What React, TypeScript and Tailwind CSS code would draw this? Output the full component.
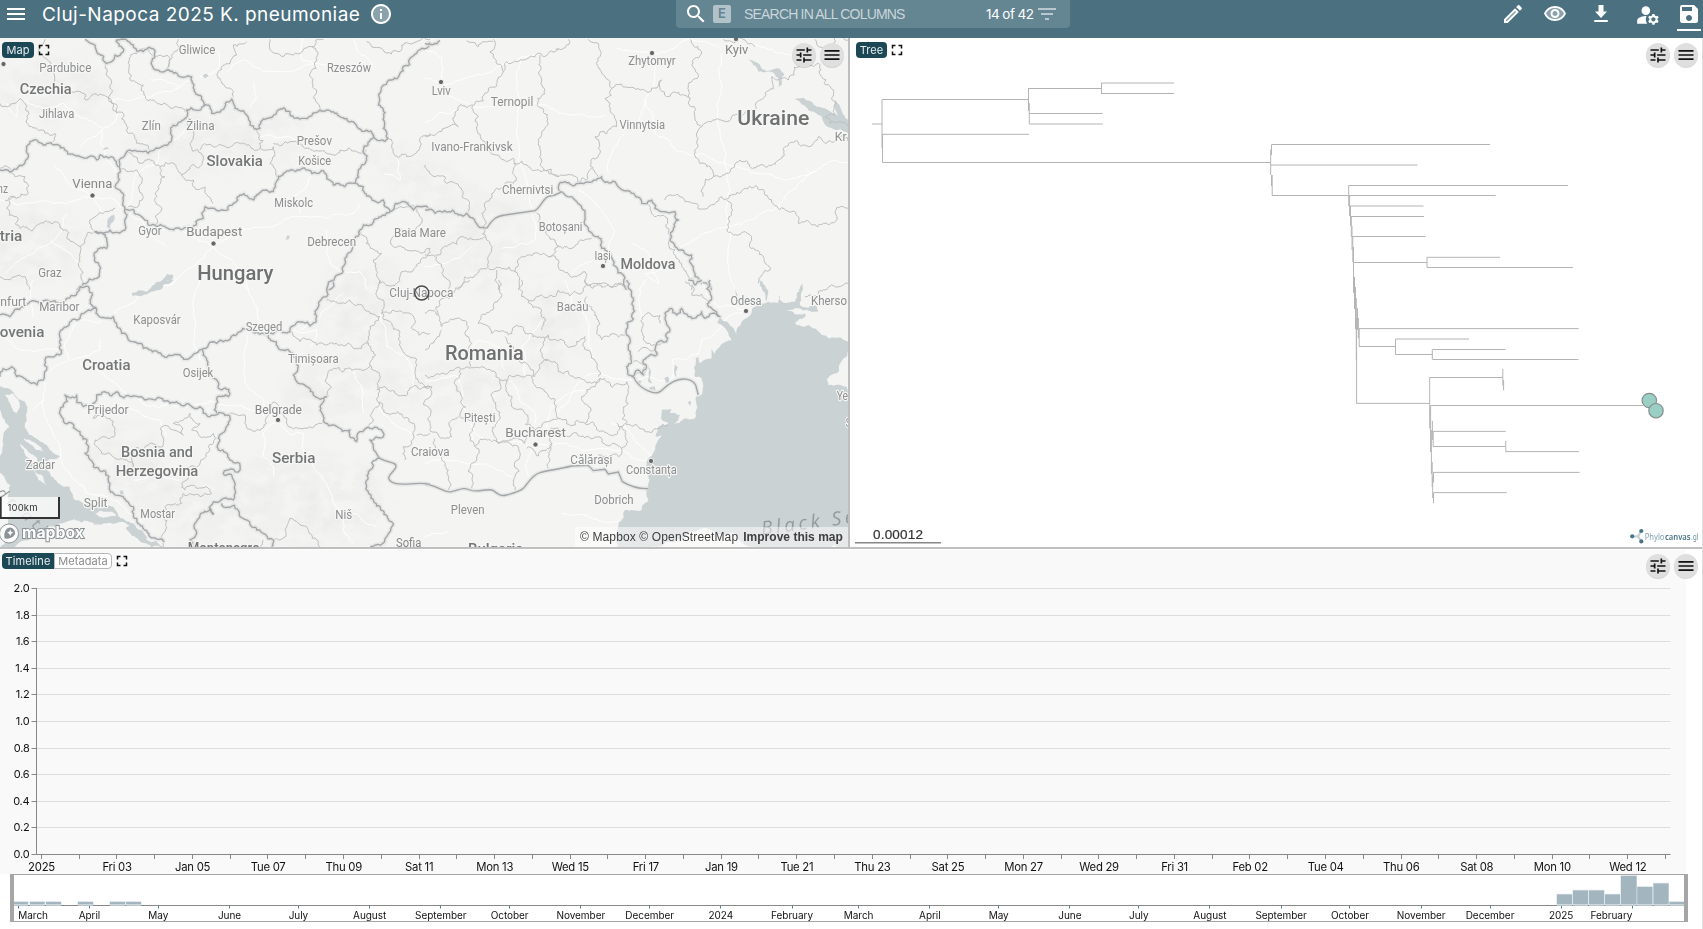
import React from "react";
import { MdManageAccounts, MdSave } from "react-icons/md";

const ICONS = {
  menu: "M3 18h18v-2H3v2zm0-5h18v-2H3v2zm0-7v2h18V6H3z",
  search:
    "M15.5 14h-.79l-.28-.27C15.41 12.59 16 11.11 16 9.5 16 5.91 13.09 3 9.5 3S3 5.91 3 9.5 5.91 16 9.5 16c1.61 0 3.09-.59 4.23-1.57l.27.28v.79l5 4.99L20.49 19l-4.99-5zm-6 0C7.01 14 5 11.99 5 9.5S7.01 5 9.5 5 14 7.01 14 9.5 11.99 14 9.5 14z",
  info: "M11 7h2v2h-2zm0 4h2v6h-2zm1-9C6.48 2 2 6.48 2 12s4.48 10 10 10 10-4.48 10-10S17.52 2 12 2zm0 18c-4.41 0-8-3.59-8-8s3.59-8 8-8 8 3.59 8 8-3.59 8-8 8z",
  tune: "M3 17v2h6v-2H3zM3 5v2h10V5H3zm10 16v-2h8v-2h-8v-2h-2v6h2zM7 9v2H3v2h4v2h2V9H7zm14 4v-2H11v2h10zm-6-4h2V7h4V5h-4V3h-2v6z",
  full: "M7 14H5v5h5v-2H7v-3zm-2-4h2V7h3V5H5v5zm12 7h-3v2h5v-5h-2v3zM14 5v2h3v3h2V5h-5z",
  filter: "M10 18h4v-2h-4v2zM3 6v2h18V6H3zm3 7h12v-2H6v2z",
  edit: "M14.06 9.02l.92.92L5.92 19H5v-.92l9.06-9.06M17.66 3c-.25 0-.51.1-.7.29l-1.83 1.83 3.75 3.75 1.83-1.83c.39-.39.39-1.02 0-1.41l-2.34-2.34c-.2-.2-.45-.29-.71-.29zm-3.6 3.19L3 17.25V21h3.75L17.81 9.94l-3.75-3.75z",
  eye: "M12 6c3.79 0 7.17 2.13 8.82 5.5C19.17 14.87 15.79 17 12 17s-7.17-2.13-8.82-5.5C4.83 8.13 8.21 6 12 6m0-2C7 4 2.73 7.11 1 11.5 2.73 15.89 7 19 12 19s9.27-3.11 11-7.5C21.27 7.11 17 4 12 4zm0 5c1.38 0 2.5 1.12 2.5 2.5S13.38 14 12 14s-2.5-1.12-2.5-2.5S10.62 9 12 9m0-2c-2.48 0-4.5 2.02-4.5 4.5S9.52 16 12 16s4.5-2.02 4.5-4.5S14.48 7 12 7z",
  download: "M18 9.5h-3.5V3h-5v6.5H6l6 6.5 6-6.5zM5.2 18v2h13.6v-2H5.2z",
};

function Icon({ d, className = "size-6", tone }: { d: string; className?: string; tone?: string }) {
  return (
    <svg viewBox="0 0 24 24" className={"shrink-0 " + className} fill="currentColor">
      {tone && <path d={tone} opacity={0.35} />}
      <path d={d} />
    </svg>
  );
}

function Header() {
  return (
    <header className="flex h-[38px] shrink-0 items-start bg-[#4b7080] text-white">
      <div className="flex w-[676px] items-start pl-1">
        <Icon d={ICONS.menu} className="mt-[2px] size-6" />
        <h1 className="ml-[14px] mt-[3px] w-[321px] whitespace-nowrap font-['Inter',sans-serif] text-[19px] leading-6 tracking-[0.46px]">
          Cluj-Napoca 2025 K. pneumoniae
        </h1>
        <Icon d={ICONS.info} tone="M12 3a9 9 0 1 0 0 18a9 9 0 0 0 0-18z" className="ml-[6px] mt-[2px] size-6" />
      </div>
      <div className="flex h-7 w-[394px] items-start rounded-b bg-[#648592] pl-2">
        <Icon d={ICONS.search} className="mt-[2px] size-6" />
        <span className="ml-[5px] mt-[5px] flex size-[18px] items-center justify-center rounded-[2px] bg-[#b2c2c9] font-['Inter',sans-serif] text-[13px] font-semibold text-[#648592]">
          E
        </span>
        <span className="ml-[13px] mt-[4px] w-[240px] whitespace-nowrap font-['Liberation_Sans',sans-serif] text-[14px] leading-5 tracking-[-0.81px] text-[#c9d5da]">
          SEARCH IN ALL COLUMNS
        </span>
        <span className="ml-[2px] mt-[4px] w-[49px] whitespace-nowrap font-['Inter',sans-serif] text-[13.5px] leading-5 tracking-[-0.55px]">
          14 of 42
        </span>
        <Icon d={ICONS.filter} className="mt-[2px] size-6 text-white/55" />
      </div>
      <div className="ml-auto flex items-start pr-[2px]">
        <Icon d={ICONS.edit} tone="M5 18v1h1l9-9-1-1z" className="mt-[2px] size-6" />
        <Icon
          d={ICONS.eye}
          tone="M12 6c-3.8 0-7.2 2.1-8.8 5.5C4.8 14.9 8.2 17 12 17s7.2-2.1 8.8-5.5C19.200 8.100 15.800 6 12 6z"
          className="ml-[18px] mt-[2px] size-6"
        />
        <Icon d={ICONS.download} className="ml-[22px] mt-[2px] size-6" />
        <MdManageAccounts className="ml-[22px] mt-[2px] size-[26px]" />
        <span className="ml-[16px] flex w-6 flex-col">
          <MdSave className="mt-[2px] size-6" />
          <span className="mt-[3px] h-[2px] bg-white" />
        </span>
      </div>
    </header>
  );
}

function Tabs({ active, other, width }: { active: string; other?: string; width: string }) {
  return (
    <div className="flex h-4 items-center font-['Inter',sans-serif] text-[11px] leading-4 tracking-[0.1px]">
      <span className={"h-4 bg-[#1c4755] text-center text-[#e8eef0] " + (other ? "rounded-l " : "rounded ") + width}>
        {active}
      </span>
      {other && (
        <span className="h-4 w-[58px] rounded-r border border-[#b8b8b8] bg-white text-center leading-[14px] text-[#8b8b8b]">
          {other}
        </span>
      )}
      <Icon d={ICONS.full} className="ml-px size-[18px] text-[#111]" />
    </div>
  );
}

function PanelButtons() {
  return (
    <div className="flex gap-1">
      <span className="flex size-6 items-center justify-center rounded-full bg-[#dfdfdf] text-[#111] shadow-[0_1px_0_rgba(0,0,0,0.15)]">
        <Icon d={ICONS.tune} className="size-5" />
      </span>
      <span className="flex size-6 items-center justify-center rounded-full bg-[#dfdfdf] text-[#111] shadow-[0_1px_0_rgba(0,0,0,0.15)]">
        <Icon d={ICONS.menu} className="size-5" />
      </span>
    </div>
  );
}

/* ---------- map ---------- */

function rough(pts: string, amp: number, closed = false): string {
  const p = pts.split(" ").map((s) => s.split(",").map(Number));
  let seed = Math.round(Math.abs(p[0][0] * 31 + p[0][1] * 17 + p.length * 101)) + 7;
  const rnd = () => {
    seed = (seed * 16807) % 2147483647;
    return seed / 2147483647 - 0.5;
  };
  rnd();
  rnd();
  const out: number[][] = [p[0]];
  const split = (a: number[], b: number[]) => {
    const dx = b[0] - a[0];
    const dy = b[1] - a[1];
    const len = Math.hypot(dx, dy);
    if (len < 9) {
      out.push(b);
      return;
    }
    const k = rnd() * amp;
    const m = [(a[0] + b[0]) / 2 - dy * k, (a[1] + b[1]) / 2 + dx * k];
    split(a, m);
    split(m, b);
  };
  const all = closed ? [...p, p[0]] : p;
  for (let i = 1; i < all.length; i++) split(all[i - 1], all[i]);
  return "M" + out.map((q) => q[0].toFixed(1) + " " + q[1].toFixed(1)).join("L") + (closed ? "Z" : "");
}

interface Tile {
  x: number;
  y: number;
  water: string[];
  land: string[];
  roads: string[];
  regions: string[];
  borders: string[];
}

const TILES: Tile[] = [
  {
    x: 0,
    y: 0,
    water: [
      "440,870 480,845 500,822 520,825 518,838 490,855 480,870",
      "325,655 342,643 343,660 330,685 320,680",
      "608,226 620,221 626,228 615,235",
      "856,720 860,708 868,706 866,718",
      "303,446 318,441 327,446 312,450",
    ],
    land: [],
    roads: [
      "0,600 110,605 250,590 300,595 345,600 375,628 420,650 500,740",
      "275,590 215,560 180,510 160,495",
      "275,590 300,620 310,640",
      "310,385 260,420 240,440",
      "310,385 300,430 320,480 350,520",
      "310,385 240,350 190,310 120,320 60,290",
      "310,385 350,355 340,300 430,290 540,260 575,235",
      "540,260 500,245 450,240",
      "640,740 690,775 740,870",
      "640,740 580,800 520,850 450,870",
      "640,740 720,690 840,670 900,650 980,655",
      "900,640 880,590 920,560 940,520",
      "980,655 1060,640 1080,610",
      "980,690 980,760 1000,800 1080,815 1100,870",
      "375,628 400,560 410,520",
      "410,520 470,490 490,430 550,400 570,370",
      "640,740 560,700 480,690 400,650",
      "680,215 730,180 790,215 860,215 950,190 1100,205",
      "600,230 660,200 650,150",
      "760,250 770,290 750,320",
      "780,410 850,410 890,420",
      "1060,118 1070,150 1120,205",
      "1150,520 1200,540 1195,480",
      "20,310 50,350 60,300",
      "20,820 100,760 150,730 200,640",
      "240,790 180,740 150,720",
      "900,60 905,180 960,210",
    ],
    regions: [
      "325,190 335,250 340,320 370,340 385,400 410,430 450,450",
      "0,310 45,310 60,295 80,320 80,360 110,385 165,400 160,425",
      "215,275 240,275 260,300 330,295 350,340",
      "500,205 510,175 465,170 400,160 385,190 390,240 430,255 460,300 520,325 555,335",
      "500,205 520,160 535,118",
      "740,125 700,135 690,190 655,215 665,250 700,290",
      "810,118 825,160 880,165 935,140 970,118",
      "935,140 930,220 950,270 965,330",
      "0,505 30,505 75,530 80,585 50,595 15,600",
      "50,595 20,625 50,650 60,685 130,670 200,690 240,740 285,695",
      "240,740 235,790 250,850",
      "380,455 425,490 440,480 480,500 520,490 545,525 600,500 605,460 570,430 580,390 560,355",
      "545,525 580,540 580,560 615,560 625,590 640,610",
      "480,500 495,530 470,590 485,630 465,675",
      "410,510 425,550 430,590 385,620",
      "360,505 400,515 410,510",
      "600,450 650,440 700,435 780,445 820,440 810,490 830,530",
      "780,445 775,400 765,385",
      "820,430 870,425 900,430 970,450 1000,465 1020,450 1070,455 1100,450",
      "310,640 270,660 280,690",
      "345,625 310,640",
      "0,830 60,825 90,870",
      "1165,415 1200,470 1230,470 1260,440 1265,410 1290,400",
      "1170,635 1220,620 1265,655 1260,675 1200,690 1180,740 1220,750 1290,745",
      "1080,695 1110,740 1145,760 1120,780 1130,830 1190,850 1200,830 1240,810 1290,745",
      "160,250 155,200 130,170 135,118",
      "1100,125 1150,150 1200,155 1225,130 1290,118",
    ],
    borders: [
      "255,118 285,135 292,160 318,190 335,185 345,165 370,155 350,118",
      "350,120 400,135 430,155 462,148 465,170 455,185 480,215 500,210 540,230 575,230 580,265 605,290 612,318",
      "612,318 560,330 555,355 520,375 515,415 485,440 445,460 380,455 358,500",
      "612,318 630,320 635,340 665,330 695,297 715,330 740,345 750,375 780,385 800,355 870,335 905,355 960,330 1000,335 1040,355 1075,385 1120,405 1165,415",
      "0,510 55,500 85,470 90,425 130,435 175,435 240,470 290,480 300,465 350,485 358,500",
      "358,500 355,530 345,560 370,600 375,628",
      "375,628 400,628 430,655 470,680 560,683 610,655 605,640 615,620 700,610 720,585 760,600 820,575 850,520 900,510 950,520 970,512 1000,555 1065,550",
      "1065,550 1075,510 1100,480 1120,405",
      "1165,415 1150,385 1135,315 1200,220 1250,160 1290,125",
      "1065,550 1090,560 1110,590 1150,600 1170,635 1110,675 1080,690 1040,770 1000,850 980,870",
      "1170,635 1215,605 1240,630 1290,630",
      "375,628 375,690 330,690 285,695 320,715 320,745 290,755 300,800 290,835 250,850 230,870",
    ],
  },
  {
    x: 425,
    y: 0,
    water: [
      "965,177 1000,190 1020,210 1060,205 1078,225 1070,255 1060,262 1060,235 1030,215 1000,215 985,195",
      "1110,298 1160,305 1200,325 1240,345 1232,300 1245,320 1270,360 1270,400 1220,385 1190,350 1150,330",
      "1003,840 1012,845 1025,870 1012,870",
      "1120,870 1135,850 1130,870",
      "390,148 398,142 400,152",
    ],
    land: [],
    roads: [
      "48,255 0,235",
      "48,255 110,240 200,215 290,170 340,165",
      "48,265 100,300 200,320 280,310 360,315 430,345 540,345",
      "0,370 40,340 100,330",
      "290,170 275,230 285,310 275,400 280,480",
      "570,140 640,155 680,160 780,120 890,150",
      "680,165 690,240 660,300 640,370",
      "660,300 690,400 760,455 900,490 1000,520 1150,525 1230,480 1270,490",
      "890,160 890,250 880,380 900,490 905,640 910,760 930,870",
      "980,130 1060,160 1150,190",
      "600,400 560,460 550,520",
      "460,570 520,620 570,690 550,750",
      "280,480 310,560 320,640 330,720 230,745",
      "550,750 480,790 440,820",
      "910,680 820,710 740,760",
      "910,680 1060,620 1170,515",
      "1160,520 1140,500",
      "620,730 680,780 700,850",
      "700,850 660,820 720,800",
      "0,150 50,175 50,245",
      "140,740 60,790 0,800",
    ],
    regions: [
      "125,122 160,140 205,125",
      "205,118 195,155 235,215 190,270 140,315 105,315 90,345 100,380 50,395 0,405",
      "145,315 160,350 155,380 180,425 265,475 265,550 215,565 170,640 175,680",
      "265,490 310,500 350,515 400,530",
      "235,215 245,185 340,160 355,170 395,150 430,118",
      "345,165 350,240 340,320 350,400 350,480 400,530 500,505 520,530",
      "490,118 525,150 530,220 560,265 555,330 575,380 510,410 505,505",
      "560,265 620,262 710,240 725,290 795,295",
      "795,118 825,150 820,230 790,260 795,300 810,360 830,380 815,430 845,500 865,530 835,560 835,590",
      "720,600 780,605 890,590 900,600 1020,585 1100,635 1120,670 1160,675 1230,665 1230,635 1270,625",
      "830,380 870,360 920,350 990,330 1020,290 1040,230 1090,240 1150,195 1180,190 1190,230 1225,270 1235,310 1230,345 1200,350 1215,370 1270,380",
      "865,530 910,520 945,480 1070,475 1080,440 1150,440 1180,410 1200,430 1270,425",
      "905,600 910,670 920,700 980,710 990,750 1035,810 1000,850",
      "895,118 920,125 960,120 990,140",
      "1170,118 1200,150 1270,120",
      "0,765 40,765 70,735 110,710 180,710",
      "175,680 185,720 190,800 120,830 100,870",
      "35,770 50,820 75,850 70,870",
      "190,805 270,815 290,770 370,770 400,800 430,820 480,815 490,855 550,855 600,860",
      "335,640 360,680 390,720 400,740 500,715",
      "370,770 390,745 400,735",
      "270,815 280,870",
      "215,810 220,870",
      "0,495 30,530 60,530 65,550 110,570 130,635",
      "670,615 720,650 730,700 750,750 790,830 800,870",
    ],
    borders: [
      "0,130 45,122",
      "0,630 30,640 60,632 100,645 125,640 165,683 185,685",
      "410,575 400,560 420,545 440,555 480,548 530,530 570,545 620,580 650,610 680,600 715,635 750,635 760,660 750,740 800,765 805,800 810,830 830,850 860,870",
      "410,575 450,600 480,640 490,690 530,745 565,795 600,835 605,870",
    ],
  },
  {
    x: 0,
    y: 280,
    water: [
      "0,318 25,325 50,350 75,365 75,430 100,470 150,510 180,530 130,545 150,580 210,620 220,655 250,670 340,680 400,730 440,780 490,800 0,805",
      "395,40 440,35 480,5 520,0 500,12 470,25 430,45 398,48",
      "358,634 370,632 372,642 360,645",
    ],
    land: [
      "15,345 40,340 60,380 50,400 30,370",
      "0,400 15,420 20,450 5,440",
      "60,490 90,520 120,550 110,560 80,530",
      "100,570 130,590 140,615 115,600",
      "285,700 320,695 350,705 320,712",
      "285,730 330,728 390,738 350,745 300,742",
      "320,770 370,768 380,778 330,780",
      "70,475 90,480 130,515 110,510",
    ],
    roads: [
      "230,130 200,180 205,240 130,300 130,360 100,390",
      "210,240 250,230 300,210 300,180",
      "240,120 300,130 300,100",
      "240,250 330,300 400,350 560,380 700,375 790,400",
      "340,105 400,70 420,30",
      "600,0 580,100 580,190 600,240",
      "740,0 770,80 790,140",
      "740,165 735,310 790,360 790,410",
      "835,425 790,460 790,530 820,560 820,590",
      "835,425 870,465 910,460 920,530 970,600 1020,700 1060,790",
      "1030,40 960,110 900,150",
      "880,150 950,150 930,200",
      "1140,100 1160,200 1230,250 1240,330",
      "1060,270 1090,340 1090,400",
      "1130,370 1180,430 1240,465",
      "130,360 150,440 180,500 190,560 260,640 380,690 430,740",
      "360,370 480,420 500,470",
      "0,170 60,210 100,215 180,210",
      "400,600 460,580 540,600",
      "1060,700 1130,740",
      "100,0 90,60 100,110",
    ],
    regions: [
      "285,370 280,415 330,415 345,460 330,475 285,480 290,500 330,520 380,540 400,560 400,510",
      "400,510 450,490 490,495 485,440 520,450 550,465 545,440 520,430 570,400 600,430 575,450 600,470 640,460 640,490 600,550 565,565 560,600 545,610 555,630 620,620 635,640 600,650 550,640 545,670 495,680",
      "495,680 500,740 490,800",
      "690,400 735,405 735,430 770,450 800,430 815,370 830,370 835,400 860,415 865,440 930,440 970,420",
      "980,60 1050,60 1110,100 1140,110 1110,140 1105,190 1060,205 990,190 950,195 900,185 870,155",
      "1105,190 1110,260 1060,270 1000,265 975,300 985,350",
      "1110,255 1140,290 1140,330 1130,355",
      "1140,0 1150,60 1145,100 1190,150 1200,190 1250,240 1260,310 1290,320",
      "1145,100 1180,90 1230,100 1235,140 1290,160",
      "1130,355 1180,400 1240,465 1210,500 1215,540",
      "1130,330 1290,320",
      "1110,445 1115,400 1140,365",
      "820,780 860,740 870,715 920,740 950,780 960,800",
      "1250,465 1290,460",
      "780,800 790,780",
    ],
    borders: [
      "230,45 240,20 265,20 270,60 290,90 340,110 360,145 400,185 430,205 500,232 560,238 605,208",
      "0,105 30,110 70,80 90,65 150,65 200,55 230,45",
      "290,85 265,90 240,115 180,155 185,220 135,240 140,270 130,300 50,290 35,260 0,290",
      "605,208 650,190 700,165 720,155 800,162 870,155 885,135 930,138 950,110 955,80 980,50 1000,0",
      "605,208 620,240 635,290 690,340 685,350 650,355 650,400",
      "650,405 630,410 600,380 570,375 530,365 510,370 470,355 430,355 400,348 350,335 335,348 290,345 280,370 250,380 230,345 195,345 190,380 195,430 230,450 255,520 280,560 330,610 370,650 400,680 400,710 450,770 490,785",
      "650,405 685,405 680,440 655,475 655,510 690,540 720,570 670,580 705,630 700,660 640,665 630,690 640,705",
      "640,705 630,685 600,705 590,760 570,780 580,800",
      "665,670 720,710 770,750 820,780 815,800",
      "805,165 850,210 880,230 880,285 920,320 980,350 960,380 970,420",
      "970,420 1050,450 1070,485 1110,445 1150,470 1110,480 1140,535",
      "1140,535 1105,575 1100,620 1140,680 1180,735 1160,770 1110,800",
    ],
  },
  {
    x: 425,
    y: 280,
    water: [
      "985,82 1030,65 1060,68 1062,45 1072,65 1110,65 1135,20 1125,75 1175,78 1180,95 1110,85 1082,90 1140,100 1140,112 1110,130 1150,135 1190,165 1240,172 1272,185 1272,805 575,805 580,730 600,690 650,690 670,660 670,590 665,545 695,490 710,465 692,470 700,440 730,430 708,415 710,390 740,388 735,400 765,405 745,432 810,415 812,350 828,345 830,295 810,290 812,235 822,230 826,250 860,235 860,208 870,222 920,182 878,130 885,112 920,140 935,165 955,120",
      "670,260 678,275 680,310 670,305",
      "718,295 730,290 732,305 722,308",
      "748,255 758,262 754,290 748,280",
      "788,368 798,362 796,378",
      "672,322 690,318 694,332 675,330",
      "635,305 650,302 645,318",
      "930,25 938,50 932,48",
      "1003,0 1022,20 1025,65 1012,30",
    ],
    land: ["1272,258 1235,280 1205,300 1210,315 1272,322"],
    roads: [
      "0,300 100,290 110,360 145,420 150,500",
      "240,270 220,200 160,180 140,200",
      "250,300 290,370 330,400 330,430",
      "330,490 240,485 150,460 130,430",
      "330,490 420,490 560,510 640,540 675,543",
      "330,490 310,590",
      "390,430 440,340 500,280 600,300 740,310 740,240 820,220 830,180 900,120 960,95",
      "340,470 390,370 480,330",
      "500,240 490,130 440,70 420,0",
      "660,0 640,60 650,120",
      "410,700 480,705 580,725",
      "130,550 200,560 260,590",
      "680,540 690,600 670,640",
      "300,290 290,200 330,150 350,120",
      "560,430 650,500 690,545",
      "820,0 880,80 960,90",
      "0,550 60,540 130,555",
      "0,770 50,760 70,755",
    ],
    regions: [
      "85,40 110,20 135,0",
      "0,100 40,105 45,60 90,35",
      "40,105 50,140 130,140 140,190 135,260",
      "0,210 20,190 50,150",
      "220,0 220,60 160,130 200,160 250,165 275,135 300,160 370,165 375,180",
      "290,0 290,50 310,60 350,90 350,150",
      "310,60 390,50 400,30 470,40 485,15 480,0",
      "485,15 560,20 605,20",
      "485,50 500,90 520,120 520,165 530,180 600,165",
      "370,170 370,240 400,275 450,295 500,310 525,295 605,305",
      "375,180 480,170 485,210 500,235 520,290",
      "0,285 50,280 135,265 210,275 225,300 290,290 330,285 370,240",
      "105,270 110,350 105,410 140,420 150,500 220,490",
      "225,300 200,350 215,430 220,490 260,480 300,490",
      "250,300 260,370 300,400 330,450 370,425 400,415",
      "320,290 370,350 400,415 480,430 600,430",
      "605,305 610,370 605,430",
      "525,295 510,320 470,350 490,380 480,430",
      "600,430 640,440 660,455 700,445 730,435",
      "20,320 15,430 40,465 80,470 100,410",
      "0,320 20,320",
      "150,500 155,540 130,575 145,610 140,625",
      "30,475 50,540 70,570 70,630",
      "220,490 280,500 270,545 265,600 270,630",
      "300,490 310,460 360,450 380,490 340,528 305,505",
      "380,490 370,530 370,565",
      "360,450 430,470 530,475 590,505 605,490 575,430",
      "590,505 580,530 520,525",
      "655,130 665,100 705,105 705,130",
      "655,130 665,190 725,185",
      "640,215 690,210 690,230",
      "625,245 660,250 660,285 625,280",
      "780,5 800,45 850,65",
      "1140,50 1180,35 1220,15 1270,10",
      "240,170 260,220 280,240 325,270 330,290",
    ],
    borders: [
      "605,0 620,50 605,130 610,200 605,260 630,300",
      "855,0 860,50 850,80 885,110 840,115 830,95 790,110 770,85 755,105 740,85 720,100 735,150 725,185 695,190 695,225 655,240 665,260 655,285 640,270 620,290",
      "790,0 810,15 830,0",
    ],
  },
];

const SMOOTH: [number, number, string][] = [
  [425, 0, "M185 685C205 655 215 648 240 645L330 632C350 620 355 590 375 588S400 580 410 575"],
  [425, 280, "M630 300C650 330 690 345 705 335S720 318 745 305S800 295 812 315L820 345"],
  [425, 280, "M0 613C40 615 55 640 80 635S110 620 135 630S190 622 205 632S225 650 245 645S285 635 295 625S320 585 345 578S400 568 440 558L490 556L505 572L540 568L550 582L580 576L592 605C620 622 640 627 670 626"],
  [0, 280, "M1140 535C1165 550 1190 545 1188 560S1150 590 1175 606S1250 603 1290 613"],
];

type Kind = "city" | "cap" | "country" | "big";
// text, tile x, tile y, centre x, baseline, width, kind
const LABELS: [string, number, number, number, number, number, Kind][] = [
  ["Gliwice", 0, 0, 591, 163, 110, "city"],
  ["Pardubice", 0, 0, 196, 216, 156, "city"],
  ["Rzeszów", 0, 0, 1047, 217, 132, "city"],
  ["Czechia", 0, 0, 137, 283, 155, "country"],
  ["Jihlava", 0, 0, 170, 353, 106, "city"],
  ["Zlín", 0, 0, 454, 389, 57, "city"],
  ["Žilina", 0, 0, 601, 389, 85, "city"],
  ["Prešov", 0, 0, 943, 436, 106, "city"],
  ["Košice", 0, 0, 944, 495, 99, "city"],
  ["Slovakia", 0, 0, 704, 499, 169, "country"],
  ["Vienna", 0, 0, 277, 564, 120, "cap"],
  ["nz", 0, 0, 8, 579, 32, "city"],
  ["Miskolc", 0, 0, 881, 621, 116, "city"],
  ["Gyor", 0, 0, 450, 705, 70, "city"],
  ["Budapest", 0, 0, 643, 709, 168, "cap"],
  ["tria", 0, 0, 33, 724, 68, "country"],
  ["Debrecen", 0, 0, 995, 738, 147, "city"],
  ["Baia Mare", 0, 0, 1260, 712, 156, "city"],
  ["Hungary", 0, 0, 706, 840, 229, "big"],
  ["Graz", 0, 0, 150, 831, 70, "city"],
  ["Kyiv", 425, 0, 935, 163, 70, "cap"],
  ["Zhytomyr", 425, 0, 681, 196, 142, "city"],
  ["Lviv", 425, 0, 49, 285, 57, "city"],
  ["Ternopil", 425, 0, 261, 319, 128, "city"],
  ["Ukraine", 425, 0, 1045, 376, 216, "big"],
  ["Vinnytsia", 425, 0, 652, 388, 137, "city"],
  ["Kr", 425, 0, 1247, 423, 35, "city"],
  ["Ivano-Frankivsk", 425, 0, 141, 452, 244, "city"],
  ["Chernivtsi", 425, 0, 308, 583, 154, "city"],
  ["Botoșani", 425, 0, 407, 694, 131, "city"],
  ["Iași", 425, 0, 533, 781, 49, "city"],
  ["Moldova", 425, 0, 669, 808, 165, "country"],
  ["nfurt", 0, 280, 40, 79, 78, "city"],
  ["Maribor", 0, 280, 178, 93, 121, "city"],
  ["Kaposvár", 0, 280, 471, 132, 142, "city"],
  ["ovenia", 0, 280, 66, 172, 134, "country"],
  ["Szeged", 0, 280, 792, 153, 110, "city"],
  ["Croatia", 0, 280, 319, 271, 145, "country"],
  ["Timișoara", 0, 280, 940, 250, 152, "city"],
  ["Osijek", 0, 280, 594, 290, 92, "city"],
  ["Prijedor", 0, 280, 324, 402, 124, "city"],
  ["Belgrade", 0, 280, 835, 403, 142, "cap"],
  ["Bosnia and", 0, 280, 471, 531, 216, "country"],
  ["Herzegovina", 0, 280, 471, 587, 248, "country"],
  ["Serbia", 0, 280, 881, 549, 130, "country"],
  ["Zadar", 0, 280, 121, 567, 88, "city"],
  ["Split", 0, 280, 287, 682, 71, "city"],
  ["Mostar", 0, 280, 473, 713, 104, "city"],
  ["Niš", 0, 280, 1031, 717, 51, "city"],
  ["Sofia", 0, 280, 1226, 801, 76, "cap"],
  ["Montenegro", 0, 280, 671, 820, 216, "country"],
  ["Cluj-Napoca", 425, 280, -11, 50, 192, "city"],
  ["Bacău", 425, 280, 443, 93, 95, "city"],
  ["Odesa", 425, 280, 963, 76, 93, "city"],
  ["Kherso", 425, 280, 1212, 76, 108, "city"],
  ["Romania", 425, 280, 178, 240, 236, "big"],
  ["Ye", 425, 280, 1252, 361, 34, "city"],
  ["S", 425, 280, 1270, 442, 16, "city"],
  ["Pitești", 425, 280, 164, 425, 94, "city"],
  ["Bucharest", 425, 280, 332, 471, 182, "cap"],
  ["Craiova", 425, 280, 16, 528, 116, "city"],
  ["Călărași", 425, 280, 499, 552, 126, "city"],
  ["Constanța", 425, 280, 679, 581, 152, "city"],
  ["Dobrich", 425, 280, 567, 671, 118, "city"],
  ["Pleven", 425, 280, 128, 701, 101, "city"],
  ["Bulgaria", 425, 280, 212, 822, 166, "country"],
];

const DOTS: [number, number][] = [
  [3.5, 64], [92.5, 195.5], [213.5, 243.5], [441, 82], [652, 53], [736, 39], [603, 266],
  [278, 420], [746, 311], [535.5, 444.5], [651, 461],
];

const KIND: Record<Kind, { size: number; weight: number; fill: string }> = {
  city: { size: 12.3, weight: 400, fill: "#8d8e8f" },
  cap: { size: 13.6, weight: 400, fill: "#858687" },
  country: { size: 15.3, weight: 500, fill: "#747677" },
  big: { size: 20.3, weight: 500, fill: "#6e7071" },
};

// cx, cy, rx, ry, rotation
const HILLS: number[][] = [
  [215, 140, 90, 30, -5], [420, 180, 55, 22, 35], [480, 240, 45, 50, 20], [440, 385, 95, 22, 0],
  [365, 310, 45, 50, 10], [155, 480, 80, 35, 38], [30, 245, 55, 38, 0], [300, 500, 90, 45, 0],
  [550, 330, 26, 55, 0], [55, 90, 60, 30, 0], [330, 390, 45, 30, 0],
];

function MapPanel() {
  return (
    <section className="relative h-[509px] w-[848px] overflow-hidden bg-[#f4f4f3]">
      <svg viewBox="0 38 848 509" className="block h-[509px] w-[848px]" fill="none">
        <defs>
          <filter id="relief" x="-20%" y="-20%" width="140%" height="140%">
            <feGaussianBlur in="SourceAlpha" stdDeviation="12" result="soft" />
            <feTurbulence type="fractalNoise" baseFrequency="0.05 0.07" numOctaves="4" seed="4" />
            <feColorMatrix type="matrix" values="0 0 0 0 0.6  0 0 0 0 0.6  0 0 0 0 0.6  1.5 0 0 0 -0.45" />
            <feComposite in2="soft" operator="in" />
          </filter>
        </defs>
        <g filter="url(#relief)" opacity={0.24}>
          {HILLS.map((h, i) => (
            <ellipse
              key={i}
              cx={h[0]}
              cy={h[1]}
              rx={h[2]}
              ry={h[3]}
              fill="#000"
              transform={`rotate(${h[4]} ${h[0]} ${h[1]})`}
            />
          ))}
        </g>
        {TILES.map((t, i) => (
          <g key={i} transform={`translate(${t.x} ${t.y}) scale(0.33333)`} strokeLinejoin="round">
            {t.roads.map((r, k) => (
              <path key={k} d={rough(r, 0.25)} stroke="#ffffff" strokeWidth={3} />
            ))}
            {t.water.map((r, k) => (
              <path key={k} d={rough(r, 0.35, true)} fill="#cbd2d4" />
            ))}
            {t.land.map((r, k) => (
              <path key={k} d={rough(r, 0.3, true)} fill="#f4f4f3" />
            ))}
            {t.regions.map((r, k) => (
              <path key={k} d={rough(r, 0.6)} stroke="#bdbebf" strokeWidth={3} />
            ))}
            {t.borders.map((r, k) => (
              <path key={k} d={rough(r, 0.55)} stroke="#e0e1e1" strokeWidth={13} opacity={0.7} />
            ))}
            {t.borders.map((r, k) => (
              <path key={k} d={rough(r, 0.55)} stroke="#a3a5a6" strokeWidth={4} />
            ))}
          </g>
        ))}
        {SMOOTH.map(([x, y, d], i) => (
          <g key={i} transform={`translate(${x} ${y}) scale(0.33333)`}>
            <path d={d} stroke="#e0e1e1" strokeWidth={13} opacity={0.7} />
            <path d={d} stroke="#a3a5a6" strokeWidth={4} />
          </g>
        ))}
        <g fontFamily="'Open Sans', sans-serif" fontStyle="italic" fill="#939a9e">
          <text x={762} y={535} fontSize={19} textLength={108} transform="rotate(-7.5 762 535)">
            Black Sea
          </text>
          <text x={-14} y={485} fontSize={15} textLength={86} transform="rotate(42 -14 485)">
            Adriatic
          </text>
        </g>
        {DOTS.map(([x, y]) => (
          <circle key={x} cx={x} cy={y} r={2.6} fill="#656667" stroke="#fff" strokeWidth={0.8} />
        ))}
        <g fontFamily="Roboto, sans-serif" textAnchor="middle" stroke="#f6f6f5" strokeWidth={2.4} strokeLinejoin="round" paintOrder="stroke">
          {LABELS.map(([t, ox, oy, cx, by, w, k]) => (
            <text
              key={t}
              x={ox + cx / 3}
              y={oy + by / 3}
              fontSize={KIND[k].size}
              fontWeight={KIND[k].weight}
              fill={KIND[k].fill}
              textLength={w / 3}
              lengthAdjust="spacingAndGlyphs"
            >
              {t}
            </text>
          ))}
        </g>
        <circle cx={421.7} cy={293} r={7} stroke="#4c4c4c" strokeWidth={1.5} />
        <path d="M0.700 497V518H59V497" fill="#ffffff" fillOpacity={0.75} stroke="#333" strokeWidth={2} />
        <text x={7.500} y={511} fontFamily="Inter, sans-serif" fontSize={9.5} fill="#333" textLength={30}>
          100km
        </text>
        <g>
          <circle cx={9} cy={533.5} r={9.5} fill="#fff" stroke="#8c9396" strokeWidth={1} />
          <path d="M4.500 538.500C3.500 532 6 527.500 10.500 527.500A5.300 5.300 0 0 1 14.500 535C12 538.500 8 539 4.500 538.500Z" fill="#8c9396" />
          <path d="M10.300 529.500l1 2.200 2.200 1-2.200 1-1 2.200-1-2.200-2.200-1 2.200-1z" fill="#fff" />
          <text
            x={22}
            y={538}
            fontFamily="Inter, sans-serif"
            fontWeight={700}
            fontSize={16}
            fill="#fff"
            stroke="#8c9396"
            strokeWidth={2}
            paintOrder="stroke"
            textLength={62}
            lengthAdjust="spacingAndGlyphs"
          >
            mapbox
          </text>
        </g>
      </svg>
      <div className="absolute left-[2px] top-1">
        <Tabs active="Map" width="w-8" />
      </div>
      <div className="absolute right-1 top-[5px]">
        <PanelButtons />
      </div>
      <div className="absolute bottom-0 right-0 flex h-5 w-[273px] items-center gap-[5px] whitespace-nowrap bg-white/50 pl-[5px] font-['Liberation_Sans',sans-serif] text-[12px] text-[#404040]">
        <span className="tracking-[0.13px]">© Mapbox © OpenStreetMap</span>
        <b className="tracking-[0.02px]">Improve this map</b>
      </div>
    </section>
  );
}

/* ---------- tree ---------- */

// y, x1, x2
const H_LINES: number[][] = [
  [124, 872, 882], [99.5, 882, 1028.5], [88.5, 1028.5, 1101], [83, 1101, 1174], [93.500, 1101, 1174],
  [113.500, 1029.500, 1102.700], [124, 1029.500, 1102.700], [134.300, 882.500, 1029], [162.500, 882.500, 1271],
  [144.500, 1271.500, 1490], [165, 1271, 1417.500], [195.500, 1272, 1495.700], [185.500, 1348.500, 1568],
  [206, 1349.500, 1423.500], [216.500, 1350.500, 1424], [236.500, 1352.500, 1425.500], [262.500, 1353.500, 1427],
  [257.300, 1427, 1500], [267.500, 1427, 1573], [328.600, 1359, 1578.500], [346.500, 1359, 1395.500],
  [339, 1395.500, 1469], [354.500, 1395.500, 1432.500], [349.500, 1432.500, 1505.500], [359.500, 1432.500, 1578.500],
  [403.400, 1356.500, 1430], [377.500, 1429.500, 1503], [405.500, 1430.500, 1643], [431.400, 1432.500, 1505.700],
  [446.500, 1433, 1505.700], [451.600, 1505.700, 1579], [472.400, 1433.500, 1579.700], [492.600, 1433.500, 1506.700],
];
// x, y1, y2
const V_LINES: number[][] = [
  [882, 99.500, 148], [882.500, 134, 162.500], [1028.500, 88, 111], [1101.500, 83, 93.500], [1029.300, 103, 124],
  [1270.700, 149.500, 175], [1271.500, 144.500, 155], [1271.500, 175, 186], [1272.200, 175, 195.500],
  [1348.700, 185.500, 206], [1349.600, 195, 216], [1350.500, 206, 226], [1351.300, 216, 237], [1352, 226, 250],
  [1352.800, 236, 262], [1353.500, 247, 277], [1353.500, 262, 293], [1354.500, 277, 309], [1355.500, 287, 329], [1356.300, 298, 360],
  [1356.600, 318, 403.500], [1357.500, 308, 330], [1358.400, 318, 338], [1359.200, 328.500, 346.500],
  [1395.500, 339, 354.500], [1427, 257.300, 267.500], [1432.300, 349.500, 359.500], [1429.700, 377.500, 428.500],
  [1502.800, 369, 385.500], [1503.600, 380, 390.500], [1430.600, 405.500, 452], [1431.400, 430, 474],
  [1432.400, 421, 440], [1433.200, 431, 446.500], [1505.800, 441, 451.600], [1432.200, 462, 487], [1433.500, 472.400, 482.500],
  [1432.700, 477, 498], [1433.500, 492.600, 503],
];

function TreePanel() {
  return (
    <section className="relative h-[509px] w-[852px] overflow-hidden bg-white">
      <svg viewBox="850 38 852 509" className="block h-[509px] w-[852px]" fill="none">
        <g stroke="#b4b4b4" strokeWidth={1}>
          {H_LINES.map(([y, a, b], i) => (
            <line key={i} x1={a} x2={b} y1={y} y2={y} />
          ))}
          {V_LINES.map(([x, a, b], i) => (
            <line key={i} x1={x} x2={x} y1={a} y2={b} />
          ))}
        </g>
        <g fill="#9bcfc5" stroke="#84908e" strokeWidth={1.200}>
          <circle cx={1649.300} cy={400.500} r={7.200} />
          <circle cx={1656} cy={410.700} r={7.200} />
        </g>
        <text
          x={898}
          y={539}
          textAnchor="middle"
          fontFamily="'Liberation Sans', sans-serif"
          fontSize={13.500}
          fill="#333"
          stroke="#333"
          strokeWidth={0.200}
          textLength={50}
        >
          0.00012
        </text>
        <path d="M855 542.700H941" stroke="#888" strokeWidth={1.600} />
        <path d="M1632 536.300H1638L1641.300 531M1638 536.300L1641.300 541.300" stroke="#c5d3d9" strokeWidth={2.200} />
        <g fill="#4b7586">
          <circle cx={1632.200} cy={536.300} r={2.100} />
          <circle cx={1641.300} cy={531} r={2.100} />
          <circle cx={1641.300} cy={541.400} r={2.100} />
        </g>
        <g fontFamily="'Noto Sans', sans-serif" fontSize={9.500}>
          <text x={1644.700} y={539.500} fill="#7fa2b0" textLength={19.800} lengthAdjust="spacingAndGlyphs">
            Phylo
          </text>
          <text x={1665} y={539.500} fill="#4b7586" fontWeight={600} textLength={25.500} lengthAdjust="spacingAndGlyphs">
            canvas
          </text>
          <text x={1691} y={539.500} fill="#6c93a3" textLength={7.500} lengthAdjust="spacingAndGlyphs">
            .gl
          </text>
        </g>
      </svg>
      <div className="absolute left-[6px] top-1">
        <Tabs active="Tree" width="w-[31px]" />
      </div>
      <div className="absolute right-1 top-[5px]">
        <PanelButtons />
      </div>
    </section>
  );
}

/* ---------- timeline ---------- */

const Y_POS = [588.5, 615.5, 641.5, 668.5, 694.5, 721.5, 748.5, 774.5, 801.5, 827.5, 854.5];
const DAYS = [
  "2025", "Fri 03", "Jan 05", "Tue 07", "Thu 09", "Sat 11", "Mon 13", "Wed 15", "Fri 17", "Jan 19", "Tue 21",
  "Thu 23", "Sat 25", "Mon 27", "Wed 29", "Fri 31", "Feb 02", "Tue 04", "Thu 06", "Sat 08", "Mon 10", "Wed 12",
];
const MONTHS: [string, number][] = [
  ["March", 0], ["April", 31], ["May", 61], ["June", 92], ["July", 122], ["August", 153], ["September", 184],
  ["October", 214], ["November", 245], ["December", 275], ["2024", 306], ["February", 337], ["March", 366],
  ["April", 397], ["May", 427], ["June", 458], ["July", 488], ["August", 519], ["September", 550],
  ["October", 580], ["November", 611], ["December", 641], ["2025", 672], ["February", 703],
];
// x, width, top
const BARS: number[][] = [
  [14, 14, 902], [30, 14.500, 902], [46, 15, 902], [78, 15, 902], [110, 15, 902], [126, 15, 902],
  [1557, 15, 894.500], [1573, 15, 890.500], [1589, 15, 890.500], [1605, 15, 894.500], [1621, 15.500, 876],
  [1637.300, 15, 887], [1653.500, 15, 883.500], [1669.500, 15, 902],
];

function TimelinePanel() {
  return (
    <section className="relative h-[380px] w-[1702px] overflow-hidden bg-white">
      <svg viewBox="0 549 1702 380" className="block h-[380px] w-[1702px]" fontFamily="Inter, sans-serif">
        <rect x={0} y={550} width={1686} height={324} fill="#f9f9f9" />
        {Y_POS.slice(0, 10).map((y) => (
          <line key={y} x1={37} x2={1670.500} y1={y} y2={y} stroke="#dddddd" />
        ))}
        <g stroke="#888888">
          <path d="M36.500 588V854.500H1670.500" fill="none" />
          {Y_POS.map((y) => (
            <line key={y} x1={31.500} x2={36.500} y1={y} y2={y} />
          ))}
          {Array.from({ length: 44 }, (_, i) => {
            const x = Math.floor(41.300 + i * 37.770) + 0.5;
            return <line key={i} x1={x} x2={x} y1={855} y2={859} />;
          })}
        </g>
        <g fontSize={11} fill="#111" textAnchor="end" letterSpacing={-0.200}>
          {Y_POS.map((y, i) => (
            <text key={y} x={29.500} y={y + 3.300}>
              {(2 - i * 0.2).toFixed(1)}
            </text>
          ))}
        </g>
        <g fontSize={11.300} fill="#111" textAnchor="middle" letterSpacing={-0.250}>
          {DAYS.map((d, i) => (
            <text key={d} x={41.500 + i * 75.540} y={871}>
              {d}
            </text>
          ))}
        </g>
        <rect x={11} y={874.500} width={1676} height={47} fill="#fff" stroke="#a6a6a6" />
        {BARS.map(([x, w, y], i) => (
          <g key={i}>
            <rect x={x - 0.500} y={y - 0.700} width={w + 1} height={905.500 - y} fill="#d6dfe3" />
            <rect x={x} y={y} width={w} height={904.300 - y} fill="#a3b6bf" />
          </g>
        ))}
        <line x1={14} x2={1684} y1={905.500} y2={905.500} stroke="#888" />
        {BARS.map(([x, w], i) => (
          <line key={i} x1={x} x2={x + w} y1={905.500} y2={905.500} stroke="#b9c5ca" />
        ))}
        {MONTHS.map(([m, d]) => {
          const x = 18.300 + d * 2.296;
          const anchor = d === 0 ? "start" : d === 703 ? "end" : "middle";
          const tick = Math.floor(x) + 0.5;
          return (
            <g key={d}>
              <line x1={tick} x2={tick} y1={906} y2={908.500} stroke="#4b7f93" />
              <text x={x} y={919} fontSize={10} fill="#111" textAnchor={anchor} letterSpacing={-0.050}>
                {m}
              </text>
            </g>
          );
        })}
        <rect x={10} y={874} width={4} height={48} fill="#a6a6a6" />
        <rect x={1684} y={874} width={4} height={48} fill="#a6a6a6" />
      </svg>
      <div className="absolute left-[2px] top-1">
        <Tabs active="Timeline" other="Metadata" width="w-[52px]" />
      </div>
      <div className="absolute right-1 top-[5px]">
        <PanelButtons />
      </div>
    </section>
  );
}

export default function App() {
  return (
    <div className="flex h-[929px] w-[1703px] flex-col overflow-hidden bg-white">
      <Header />
      <main className="flex flex-1 flex-col border-r border-[#dcdcdc]">
        <div className="flex h-[511px] border-b-2 border-[#bfbfbf]">
          <MapPanel />
          <div className="w-[2px] shrink-0 bg-[#bfbfbf]" />
          <TreePanel />
        </div>
        <TimelinePanel />
      </main>
    </div>
  );
}
